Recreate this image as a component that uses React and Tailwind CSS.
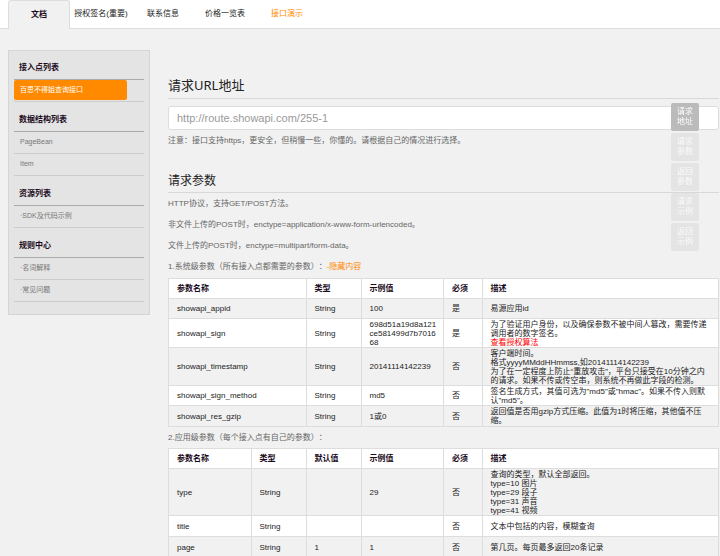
import { useState } from 'react';

const tabs = ['文档', '授权签名(重要)', '联系信息', '价格一览表'];

const menu = [
  { title: '接入点列表', items: ['百思不得姐查询接口'] },
  { title: '数据结构列表', items: ['PageBean', 'Item'] },
  { title: '资源列表', items: ['·SDK及代码示例'] },
  { title: '规则中心', items: ['·名词解释', '·常见问题'] },
];

const anchors = [
  ['请求', '地址'],
  ['请求', '参数'],
  ['返回', '参数'],
  ['请求', '示例'],
  ['返回', '示例'],
];

const systemColumns = [
  { label: '参数名称', width: 'w-[25%]' },
  { label: '类型', width: 'w-[10%]' },
  { label: '示例值', width: 'w-[15%]' },
  { label: '必须', width: 'w-[7%]' },
  { label: '描述', width: 'w-[43%]' },
];

const systemRows = [
  { height: 'h-5', cells: ['showapi_appid', 'String', '100', '是', '易源应用id'] },
  {
    height: 'h-[29px]',
    cells: [
      'showapi_sign',
      'String',
      '698d51a19d8a121ce581499d7b701668',
      '是',
      <>
        为了验证用户身份，以及确保参数不被中间人篡改，需要传递调用者的数字签名。
        <br />
        <a href="#sign" className="text-[#ff0000]">查看授权算法</a>
      </>,
    ],
  },
  {
    height: 'h-[38px]',
    cells: [
      'showapi_timestamp',
      'String',
      '20141114142239',
      '否',
      <>
        客户端时间。
        <br />
        格式yyyyMMddHHmmss,如20141114142239
        <br />
        为了在一定程度上防止“重放攻击”，平台只接受在10分钟之内的请求。如果不传或传空串，则系统不再做此字段的检测。
      </>,
    ],
  },
  {
    height: 'h-5',
    cells: ['showapi_sign_method', 'String', 'md5', '否', '签名生成方式，其值可选为"md5"或"hmac"。如果不传入则默认"md5"。'],
  },
  {
    height: 'h-[21px]',
    cells: ['showapi_res_gzip', 'String', '1或0', '否', '返回值是否用gzip方式压缩。此值为1时将压缩，其他值不压缩。'],
  },
];

const appColumns = [
  { label: '参数名称', width: 'w-[15%]' },
  { label: '类型', width: 'w-[10%]' },
  { label: '默认值', width: 'w-[10%]' },
  { label: '示例值', width: 'w-[15%]' },
  { label: '必须', width: 'w-[7%]' },
  { label: '描述', width: 'w-[43%]' },
];

const appRows = [
  {
    height: 'h-[47px]',
    cells: [
      'type',
      'String',
      '',
      '29',
      '否',
      <>
        查询的类型，默认全部返回。
        <br />
        type=10 图片
        <br />
        type=29 段子
        <br />
        type=31 声音
        <br />
        type=41 视频
      </>,
    ],
  },
  { height: 'h-[21px]', cells: ['title', 'String', '', '', '否', '文本中包括的内容，模糊查询'] },
  { height: 'h-[21px]', cells: ['page', 'String', '1', '1', '否', '第几页。每页最多返回20条记录'] },
];

const ParamTable = ({ columns, rows }) => (
  <table className="w-full table-fixed border-collapse text-left leading-[9px] text-[#222]">
    <thead>
      <tr className="h-5 bg-white text-[#1a0a20]">
        {columns.map((column) => (
          <th key={column.label} className={`${column.width} border border-[#ddd] py-0 pl-2 font-bold`}>
            {column.label}
          </th>
        ))}
      </tr>
    </thead>
    <tbody>
      {rows.map((row) => (
        <tr key={row.cells[0]} className={`${row.height} even:bg-white`}>
          {row.cells.map((cell, i) => (
            <td
              key={i}
              className={`border border-[#ddd] py-0 pl-2 align-middle ${i === row.cells.length - 1 ? 'pr-2' : 'pr-1 break-all'}`}
            >
              {cell}
            </td>
          ))}
        </tr>
      ))}
    </tbody>
  </table>
);

const Sidebar = () => (
  <aside className="w-[142px] shrink-0 self-start border border-[#d5d5d5] bg-[#e4e4e4] px-[5px] pb-3">
    {menu.map((group, g) => (
      <section key={group.title}>
        <h3
          className={`flex items-end border-b border-[#aaa] pb-[5px] pl-[5px] font-bold text-[#1a0a20] ${
            g === 0 ? 'h-[29px]' : 'h-[30px]'
          }`}
        >
          {group.title}
        </h3>
        <ul className="text-[7px] text-[#777]">
          {group.items.map((item) => (
            <li key={item} className="h-[22px] border-b border-[#ccc]">
              {g === 0 ? (
                <a href="#point" className="mr-[17px] flex h-5 items-center rounded-[2px] bg-[#ff8a00] pl-1.5 text-white">
                  {item}
                </a>
              ) : (
                <a href="#item" className="flex h-5 items-center pl-1.5">
                  {item}
                </a>
              )}
            </li>
          ))}
        </ul>
      </section>
    ))}
  </aside>
);

const App = () => {
  const [activeTab, setActiveTab] = useState(0);
  const [activeAnchor, setActiveAnchor] = useState(0);
  const [showSystem, setShowSystem] = useState(true);

  return (
    <div className="min-h-screen bg-[#f1f1f1] font-['Liberation_Sans','Noto_Sans_CJK_SC',sans-serif] text-[8px] leading-3 text-[#666] [text-spacing-trim:space-all]">
      {/* Top tabs */}
      <nav className="flex h-[29px] border-b border-[#ddd] bg-white pl-2 text-[#222]">
        {tabs.map((tab, i) => (
          <button
            key={tab}
            type="button"
            onClick={() => setActiveTab(i)}
            className={`w-[62px] whitespace-nowrap ${
              i === activeTab
                ? '-mb-px rounded-t-[3px] border border-b-0 border-[#ddd] bg-[#f1f1f1] font-bold text-[#1a0a20]'
                : ''
            }`}
          >
            {tab}
          </button>
        ))}
        <a href="#demo" className="flex w-[62px] items-center justify-center text-[#ff8a00]">
          接口演示
        </a>
      </nav>

      <div className="flex gap-[18px] pt-[21px] pr-px pl-2">
        <Sidebar />

        <main className="min-w-0 flex-1 pt-[26px]">
          <h2 className="border-b border-[#d8d8d8] pb-1 font-['Noto_Sans','Noto_Sans_CJK_SC',sans-serif] text-[13px] leading-[18px] text-[#222]">
            请求URL地址
          </h2>
          <input
            type="text"
            readOnly
            aria-label="请求URL地址"
            value="http://route.showapi.com/255-1"
            className="mt-[7px] block h-6 w-full rounded-[3px] border border-[#ddd] bg-white px-2 text-[11px] text-[#999] outline-none"
          />
          <p className="mt-[5px]">注意：接口支持https，更安全，但稍慢一些，你懂的。请根据自己的情况进行选择。</p>

          <h2 className="mt-[25px] border-b border-[#d8d8d8] pb-0.5 font-['Noto_Sans','Noto_Sans_CJK_SC',sans-serif] text-[12px] leading-[18px] text-[#222]">
            请求参数
          </h2>
          <div className="mt-[5px] flex flex-col gap-[9px]">
            <p>HTTP协议，支持GET/POST方法。</p>
            <p>非文件上传的POST时，enctype=application/x-www-form-urlencoded。</p>
            <p>文件上传的POST时，enctype=multipart/form-data。</p>
            <p>
              1.系统级参数（所有接入点都需要的参数）：
              <button type="button" onClick={() => setShowSystem(!showSystem)} className="text-[#ff8a00]">
                {showSystem ? '-隐藏内容' : '+显示内容'}
              </button>
            </p>
          </div>
          <div className="mt-[5px]">{showSystem && <ParamTable columns={systemColumns} rows={systemRows} />}</div>
          <p className="mt-[5px] mb-1">2.应用级参数（每个接入点有自己的参数）：</p>
          <ParamTable columns={appColumns} rows={appRows} />
        </main>
      </div>

      {/* Floating section links */}
      <div className="fixed top-[103px] right-[21px] flex flex-col gap-0.5">
        {anchors.map(([first, second], i) => (
          <button
            key={first + second}
            type="button"
            onClick={() => setActiveAnchor(i)}
            className={`size-7 rounded-[2px] leading-[10px] ${
              i === activeAnchor ? 'bg-[#bbb] text-white' : 'bg-[#e4e4e4] text-[#fafafa]'
            }`}
          >
            {first}
            <br />
            {second}
          </button>
        ))}
      </div>
    </div>
  );
};

export default App;
